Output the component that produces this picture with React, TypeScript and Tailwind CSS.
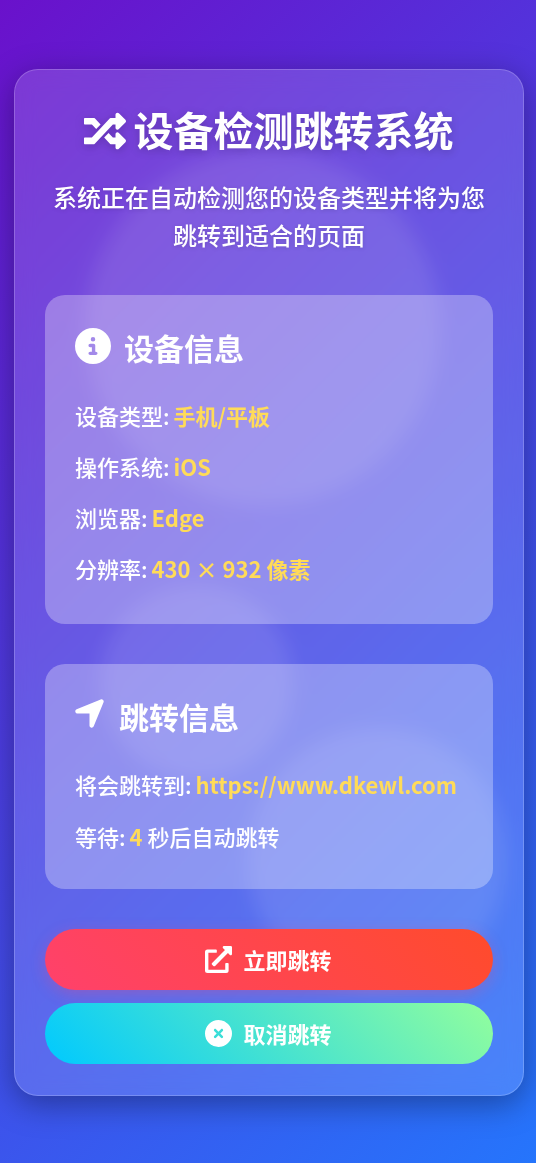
import { FaRandom, FaExternalLinkAlt } from "react-icons/fa";
import { FaCircleInfo, FaLocationArrow, FaCircleXmark } from "react-icons/fa6";

function Row({ label, value, tail }: { label: string; value: string; tail?: string }) {
  return (
    <p className="text-[22px] leading-[35.2px] font-medium text-white whitespace-nowrap">
      {label} <span className="-ml-px font-bold text-[#ffdb58]">{value}</span>
      {tail ? ` ${tail}` : ""}
    </p>
  );
}

export default function App() {
  return (
    <div className="relative min-h-screen overflow-hidden flex items-center pt-[2px] pl-[14px] bg-[linear-gradient(135deg,#6a11cb,#2575fc)] font-['Noto_Sans_CJK_SC',sans-serif] text-white">
      {/* background bubbles */}
      <div className="absolute left-[85px] top-[150px] w-[355px] h-[355px] rounded-full bg-white/10" />
      <div className="absolute left-[100px] top-[585px] w-[193px] h-[193px] rounded-full bg-white/10" />
      <div className="absolute left-[247px] top-[728px] w-[260px] h-[260px] rounded-full bg-white/10" />

      <div className="relative w-[510px] rounded-[24px] border border-white/20 bg-white/15 backdrop-blur-[10px] px-[30px] pt-[30px] pb-[31px] shadow-[0_8px_32px_rgba(0,0,0,0.35)]">
        <h1 className="flex items-center justify-center gap-[8px] pr-px text-[40px] leading-[58px] font-bold [text-shadow:0_2px_10px_rgba(0,0,0,0.2)]">
          <FaRandom className="w-[42px] h-[42px] mt-[4px] drop-shadow-[0_2px_5px_rgba(0,0,0,0.2)]" />
          设备检测跳转系统
        </h1>
        <p className="mt-[20px] text-center text-[24px] leading-[38.4px] font-medium [text-shadow:0_1px_4px_rgba(0,0,0,0.15)]">
          系统正在自动检测您的设备类型并将为您跳转到适合的页面
        </p>

        <section className="mt-[40px] rounded-[20px] bg-white/30 px-[30px] pt-[30px] pb-[38px]">
          <h2 className="flex items-center gap-[13px] text-[30px] leading-[44px] font-bold">
            <FaCircleInfo className="w-[36px] h-[36px] -mt-[2px]" />
            设备信息
          </h2>
          <div className="mt-[29px] flex flex-col gap-[16px]">
            <Row label="设备类型:" value="手机/平板" />
            <Row label="操作系统:" value="iOS" />
            <Row label="浏览器:" value="Edge" />
            <Row label="分辨率:" value="430 × 932 像素" />
          </div>
        </section>

        <section className="mt-[40px] rounded-[20px] bg-white/30 px-[30px] pt-[30px] pb-[35.5px]">
          <h2 className="flex items-center gap-[12px] text-[30px] leading-[44px] font-bold">
            <FaLocationArrow className="w-[35px] h-[35px] -ml-[3px] -mt-[6px]" />
            跳转信息
          </h2>
          <div className="mt-[29px] flex flex-col gap-[16px]">
            <Row label="将会跳转到:" value="https://www.dkewl.com" />
            <Row label="等待:" value="4" tail="秒后自动跳转" />
          </div>
        </section>

        <div className="mt-[40px] flex flex-col gap-[13px]">
          <button className="flex items-center justify-center gap-[11px] h-[61px] pr-px rounded-full bg-[linear-gradient(45deg,#ff416c,#ff4b2b)] text-[22px] font-bold shadow-[0_4px_15px_rgba(255,65,108,0.3)]">
            <FaExternalLinkAlt className="w-[27px] h-[27px]" />
            立即跳转
          </button>
          <button className="flex items-center justify-center gap-[11px] h-[61px] pr-px rounded-full bg-[linear-gradient(45deg,#00c9ff,#92fe9d)] text-[22px] font-bold">
            <FaCircleXmark className="w-[27px] h-[27px]" />
            取消跳转
          </button>
        </div>
      </div>
    </div>
  );
}
